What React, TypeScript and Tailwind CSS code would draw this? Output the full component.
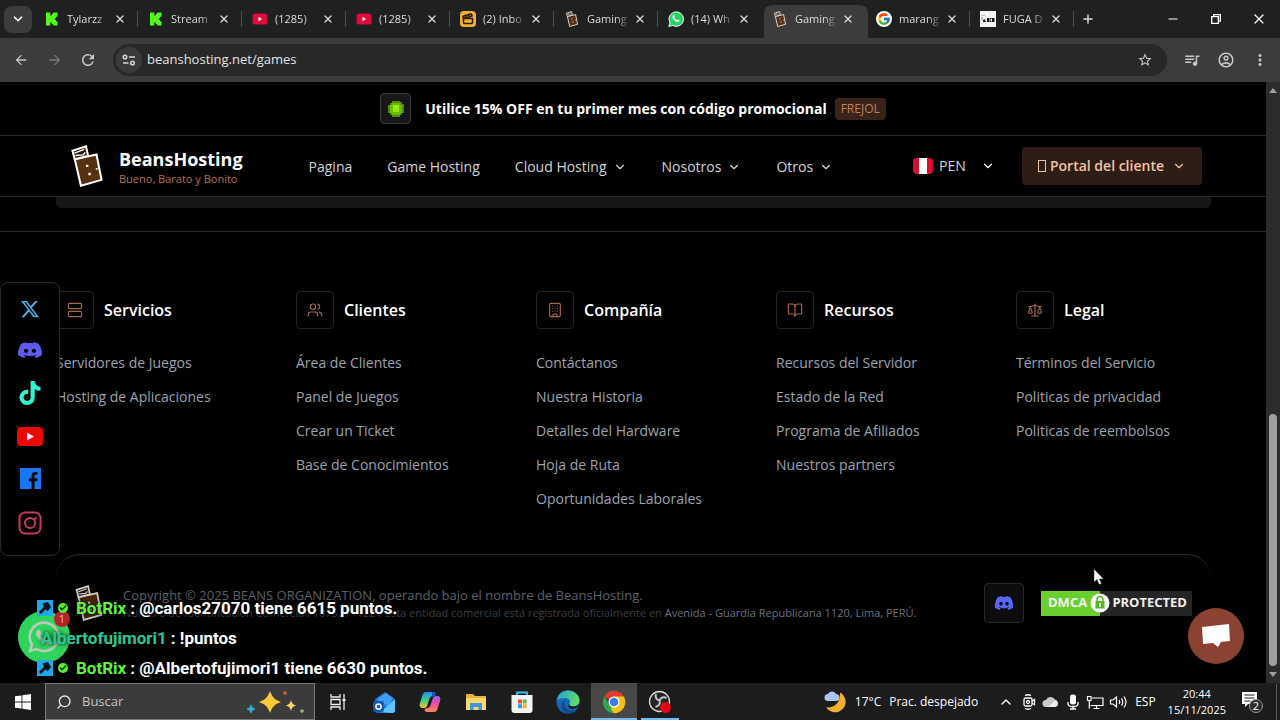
import React from "react";
import {
  MdArrowBack,
  MdArrowForward,
  MdMoreVert,
  MdOutlineAccountCircle,
  MdQueueMusic,
  MdRefresh,
  MdStarBorder,
} from "react-icons/md";
import {
  FaDiscord,
  FaTiktok,
  FaWhatsapp,
  FaXTwitter,
} from "react-icons/fa6";
import { FcGoogle } from "react-icons/fc";
import {
  BookOpen,
  Building,
  Check,
  ChevronDown,
  ChevronUp,
  Clapperboard,
  Minus,
  Plus,
  Scale,
  Search,
  Users,
  X,
} from "lucide-react";

interface IconProps {
  className?: string;
  strokeWidth?: number;
}

const BeansLogo = ({ className = "" }: IconProps) => (
  <svg viewBox="0 0 92 124" className={className} aria-hidden="true">
    <path d="M10 42 74 28 89 103 28 120Z" fill="#57300f" stroke="#fff" strokeWidth="6" />
    <path d="M3 17 43 4 49 32 10 42Z" fill="#2a1608" stroke="#fff" strokeWidth="6" />
    <path d="M9 24 38 13M12 31 34 29 41 22" fill="none" stroke="#fff" strokeWidth="4" />
    <path d="M43 58h7v7h-7zM50 82h7v7h-7zM72 68h5v5h-5z" fill="#fff" />
  </svg>
);

const KickIcon = () => (
  <svg viewBox="0 0 16 16" className="size-4 shrink-0">
    <path
      d="M2 1.500h4.200v3h1.500V3h1.500V1.500h4.300v4.300H12v1.500h-1.300v1.400H12v1.500h1.500v4.300H9.200V13H7.700v-1.500H6.200v3H2z"
      fill="#53fc18"
    />
  </svg>
);

const YoutubeTabIcon = () => (
  <svg viewBox="0 0 16 16" className="size-4 shrink-0">
    <rect x="0.500" y="2.500" width="15" height="11" rx="2.500" fill="#e2093c" />
    <path d="M6.500 5.800v4.400L10.200 8z" fill="#fff" />
  </svg>
);

const InboxIcon = () => (
  <span className="flex size-4 shrink-0 items-center justify-center rounded bg-[#f0b132] text-[#2b1c05]">
    <Clapperboard className="size-3" strokeWidth={3} />
  </span>
);

const WhatsappTabIcon = () => (
  <svg viewBox="0 0 16 16" className="size-4 shrink-0">
    <path d="M.8 15.400 2 11.600A7.200 7.200 0 1 1 4.800 14.400z" fill="#25d366" stroke="#fff" strokeWidth="1" />
    <path
      d="M5.300 4.200c.5-.4.9-.2 1.100.3l.4 1c.1.4-.3.8-.6 1.200.6 1.200 1.500 2 2.800 2.500.4-.4.7-1 1.200-.8l1.100.6c.5.3.3.9 0 1.300-.8.9-2 .9-3.200.3-1.700-.8-3-2.200-3.500-3.800-.3-1 0-2 .7-2.600z"
      fill="#fff"
    />
  </svg>
);

const GoogleTabIcon = () => (
  <span className="flex size-4 shrink-0 items-center justify-center rounded-full bg-white">
    <FcGoogle className="size-3.5" />
  </span>
);

const FugaIcon = () => (
  <svg viewBox="0 0 16 16" className="size-4 shrink-0">
    <path d="M0 0h16v16H0z" fill="#f4f4f4" />
    <path d="M3 11c0-2 .5-3 1.500-3L6 11zM7 7h2v4H7zM9.500 7h2v1h-1v2h1v1h-2zM12 7h2.500v4H12z" fill="#1b1b1b" />
    <path d="M1 4h4v1H1zM1 6h2v3H1z" fill="#bdbdbd" />
  </svg>
);

const BeansTabIcon = () => <BeansLogo className="h-4 w-4 shrink-0" />;

interface TabType {
  title: string;
  icon: React.FC;
  active?: boolean;
  next?: boolean;
}

const tabs: TabType[] = [
  { title: "Tylarzz", icon: KickIcon },
  { title: "Stream", icon: KickIcon },
  { title: "(1285)", icon: YoutubeTabIcon },
  { title: "(1285)", icon: YoutubeTabIcon },
  { title: "(2) Inbo", icon: InboxIcon },
  { title: "Gaming", icon: BeansTabIcon },
  { title: "(14) Wh", icon: WhatsappTabIcon, next: true },
  { title: "Gaming", icon: BeansTabIcon, active: true },
  { title: "marang", icon: GoogleTabIcon },
  { title: "FUGA D", icon: FugaIcon },
];

const TabStrip = () => (
  <div className="flex h-[38px] shrink-0 items-stretch bg-[#1f2020] text-[#dcdcdc]">
    <div className="flex w-9 shrink-0 items-center pl-1">
      <button
        aria-label="Buscar pestañas"
        className="flex h-[27px] w-7 items-center justify-center rounded-lg bg-[#3c3c3c] text-white"
      >
        <ChevronDown className="size-3.5" strokeWidth={3} />
      </button>
    </div>
    {tabs.map(({ title, icon: Icon, active, next }, i) => (
      <div
        key={i}
        className={`relative mt-[5px] flex h-[33px] w-26 min-w-0 items-center pb-[5px] pl-2 ${
          active ? "rounded-t-lg bg-[#3c3c3c]" : ""
        }`}
      >
        <Icon />
        <span className="ml-[7px] w-11 text-[11px] whitespace-nowrap [mask-image:linear-gradient(to_right,black_65%,transparent)]">
          {title}
        </span>
        <button aria-label="Cerrar pestaña" className="ml-px flex size-4 items-center justify-center">
          <X className="size-3" strokeWidth={2.5} />
        </button>
        {!active && !next && <span className="absolute right-0.5 h-4 w-px bg-[#4b4b4b]" />}
      </div>
    ))}
    <button aria-label="Nueva pestaña" className="flex w-6 items-center justify-center">
      <Plus className="size-3.5" strokeWidth={2.5} />
    </button>
    <div className="ml-auto flex text-white">
      <button aria-label="Minimizar" className="flex w-[43px] items-center justify-center">
        <Minus className="size-3.5" />
      </button>
      <button aria-label="Restaurar" className="flex w-[43px] items-center justify-center">
        <svg viewBox="0 0 10 10" className="size-2.5" fill="none" stroke="currentColor" strokeWidth="1.300">
          <path d="M.7 2.700h6.600v6.600H.7zM2.800 2.700v-2h6.500v6.500h-2" />
        </svg>
      </button>
      <button aria-label="Cerrar" className="flex w-[43px] items-center justify-center">
        <X className="size-4" strokeWidth={1.8} />
      </button>
    </div>
  </div>
);

const Toolbar = () => (
  <div className="flex h-11 shrink-0 items-center bg-[#3c3c3c] pr-1 pb-px pl-1 text-[#c7c7c7]">
    <button aria-label="Atrás" className="flex w-[34px] justify-center">
      <MdArrowBack className="size-4" />
    </button>
    <button aria-label="Adelante" className="flex w-[33px] justify-center text-[#7b7b7b]">
      <MdArrowForward className="size-4" />
    </button>
    <button aria-label="Recargar" className="flex w-[34px] justify-center">
      <MdRefresh className="size-[18px]" />
    </button>
    <div className="ml-2 flex h-8 flex-1 items-center rounded-full bg-[#282828] pr-3.5 pl-[3px]">
      <button
        aria-label="Información del sitio"
        className="flex size-[26px] items-center justify-center rounded-full bg-[#3a3a3a]"
      >
        <svg viewBox="0 0 14 12" className="h-3 w-3.5" fill="none" stroke="#d6d6d6" strokeWidth="1.500">
          <circle cx="3" cy="3" r="1.800" />
          <path d="M7 3h6M1 9h5.500" />
          <circle cx="10.500" cy="9" r="1.800" />
        </svg>
      </button>
      <input
        aria-label="Dirección"
        defaultValue="beanshosting.net/games"
        className="ml-[5px] min-w-0 flex-1 bg-transparent text-[13px] text-[#e3e3e3] outline-none"
      />
      <button aria-label="Añadir a favoritos">
        <MdStarBorder className="size-4" />
      </button>
    </div>
    <button aria-label="Multimedia" className="ml-2 flex w-[34px] justify-center">
      <MdQueueMusic className="size-[18px]" />
    </button>
    <button aria-label="Perfil" className="flex w-[34px] justify-center">
      <MdOutlineAccountCircle className="size-[18px]" />
    </button>
    <button aria-label="Menú" className="flex w-[33px] justify-center">
      <MdMoreVert className="size-[18px]" />
    </button>
  </div>
);

const PromoBar = () => (
  <div className="flex h-[54px] items-center justify-center border-b border-[#2b2b2b]">
    <span className="flex size-[31px] items-center justify-center rounded border border-[#3a3a3d] bg-[#17171a]">
      <svg viewBox="0 0 18 18" className="size-[18px]">
        <path d="M5 1h8v1h2v2h2v9h-2v2h-2v2H5v-2H3v-2H1V5h2V3h2z" fill="#4c8c06" />
        <path d="M5 3h8v2h2v8h-2v2H5v-2H3V5h2z" fill="#6dbb08" />
        <path d="M6 5h6v7H6z" fill="#92ea0e" />
      </svg>
    </span>
    <p className="ml-3.5 text-sm font-bold">Utilice 15% OFF en tu primer mes con código promocional</p>
    <span className="ml-2 rounded bg-[#3a2318] px-1.5 text-xs leading-[22px] text-[#bd825f]">FREJOL</span>
  </div>
);

const navItems = [
  { label: "Pagina", menu: false },
  { label: "Game Hosting", menu: false },
  { label: "Cloud Hosting", menu: true },
  { label: "Nosotros", menu: true },
  { label: "Otros", menu: true },
];

const Header = () => (
  <header className="flex h-[61px] items-center border-b border-[#2b2b2b] pr-16 pl-[71px]">
    <a href="#inicio" className="flex items-center">
      <BeansLogo className="h-[42px] w-8" />
      <span className="ml-4 flex flex-col pt-0.5">
        <span className="text-lg leading-6 font-bold">BeansHosting</span>
        <span className="text-[11px] leading-4 font-medium text-[#b5704c]">Bueno, Barato y Bonito</span>
      </span>
    </a>
    <nav className="ml-[66px] flex items-center gap-[35px] pt-px text-sm text-[#d4d4d8]">
      {navItems.map(({ label, menu }) =>
        menu ? (
          <button key={label} className="flex items-center gap-1.5">
            {label}
            <ChevronDown className="size-3.5" />
          </button>
        ) : (
          <a key={label} href="#nav">
            {label}
          </a>
        )
      )}
    </nav>
    <div className="relative ml-auto flex items-center">
      <svg viewBox="0 0 20 16" className="h-4 w-5">
        <rect width="20" height="16" rx="4" fill="#d80f30" />
        <path d="M6 0h8v16H6z" fill="#fff" />
      </svg>
      <select
        aria-label="Moneda"
        className="ml-1.5 w-14 appearance-none bg-transparent text-sm text-[#d4d4d8] outline-none"
      >
        <option>PEN</option>
        <option>USD</option>
      </select>
      <ChevronDown className="pointer-events-none absolute right-0 size-3.5" />
    </div>
    <button className="ml-[27px] flex h-[38px] items-center rounded bg-[#2e1d15] px-4 text-sm font-semibold text-[#f3c3a5]">
      <span className="mr-1 h-3 w-2 border border-[#f3c3a5]" />
      Portal del cliente
      <ChevronDown className="ml-2 size-3.5" />
    </button>
  </header>
);

const ServerIcon = ({ className = "", strokeWidth = 2 }: IconProps) => (
  <svg viewBox="0 0 24 24" className={className} fill="none" stroke="currentColor" strokeWidth={strokeWidth}>
    <rect x="2" y="2" width="20" height="8" rx="2" />
    <rect x="2" y="14" width="20" height="8" rx="2" />
  </svg>
);

const footerColumns = [
  {
    title: "Servicios",
    icon: ServerIcon,
    links: ["Servidores de Juegos", "Hosting de Aplicaciones"],
  },
  {
    title: "Clientes",
    icon: Users,
    links: ["Área de Clientes", "Panel de Juegos", "Crear un Ticket", "Base de Conocimientos"],
  },
  {
    title: "Compañía",
    icon: Building,
    links: [
      "Contáctanos",
      "Nuestra Historia",
      "Detalles del Hardware",
      "Hoja de Ruta",
      "Oportunidades Laborales",
    ],
  },
  {
    title: "Recursos",
    icon: BookOpen,
    links: ["Recursos del Servidor", "Estado de la Red", "Programa de Afiliados", "Nuestros partners"],
  },
  {
    title: "Legal",
    icon: Scale,
    links: ["Términos del Servicio", "Politicas de privacidad", "Politicas de reembolsos"],
  },
];

const DmcaBadge = () => (
  <a
    href="#dmca"
    className="relative flex h-[25px] w-[151px] items-center text-[13px] font-bold text-[#f1f1f1]"
  >
    <span className="flex h-full w-[59px] items-center bg-[#68cf2c] pl-[7px]">DMCA</span>
    <span className="flex h-full flex-1 items-center justify-end bg-[#252525] pr-[5px]">PROTECTED</span>
    <svg viewBox="0 0 20 20" className="absolute left-[49px] size-5">
      <circle cx="10" cy="10" r="9.500" fill="#fff" />
      <path d="M7 8V6.500a3 3 0 0 1 6 0V8" fill="none" stroke="#58b823" strokeWidth="1.500" />
      <path d="M5.500 8h9v7.500h-9z" fill="#58b823" />
      <path d="M9.200 10h1.600v4H9.200z" fill="#fff" />
    </svg>
  </a>
);

const Footer = () => (
  <footer className="mt-[23px] border-t border-[#2b2b2b] pt-[59px] pr-[55px] pl-14">
    <div className="grid grid-cols-5 gap-[45px]">
      {footerColumns.map(({ title, icon: Icon, links }) => (
        <section key={title}>
          <h2 className="flex items-center gap-2.5 text-base font-semibold">
            <span className="flex size-[38px] items-center justify-center rounded border border-[#232326] text-[#a4694a]">
              <Icon className="size-4" strokeWidth={1.7} />
            </span>
            {title}
          </h2>
          <ul className="mt-[22px] space-y-2.5 text-sm leading-6 whitespace-nowrap text-[#9ca3af]">
            {links.map((link) => (
              <li key={link}>
                <a href="#footer">{link}</a>
              </li>
            ))}
          </ul>
        </section>
      ))}
    </div>
    <div className="mt-[43px] flex items-center rounded-t-3xl border-t border-[#2b2b2b] px-[19px] pt-7">
      <BeansLogo className="h-9 w-7 opacity-80" />
      <div className="ml-5 pt-0.5 whitespace-nowrap">
        <p className="text-[13px] leading-[18px] text-[#5b606b]">
          Copyright © 2025 BEANS ORGANIZATION, operando bajo el nombre de BeansHosting.
        </p>
        <p className="text-[11px] leading-[18px] text-[#3a3d44]">
          Número de Identificación Comercial: 10752711221 Esta entidad comercial está registrada oficialmente en{" "}
          <span className="text-[#6b7280]">Avenida - Guardia Republicana 1120, Lima, PERÚ.</span>
        </p>
      </div>
      <a
        href="#discord"
        aria-label="Discord"
        className="ml-auto flex size-10 items-center justify-center rounded border border-[#27272a] bg-[#0c0c0e] text-[#5865f2]"
      >
        <FaDiscord className="size-5" />
      </a>
      <div className="ml-[17px]">
        <DmcaBadge />
      </div>
    </div>
  </footer>
);

const SocialBar = () => (
  <aside className="absolute top-[200px] left-0 flex w-[60px] flex-col items-center gap-[22px] rounded-lg border border-[#2b2b2b] bg-black pt-4 pb-5">
    <a href="#x" aria-label="X" className="text-[#4fa9e0]">
      <FaXTwitter className="size-5" />
    </a>
    <a href="#discord" aria-label="Discord" className="text-[#5e5cf0]">
      <FaDiscord className="h-[18px] w-[26px]" preserveAspectRatio="none" />
    </a>
    <a href="#tiktok" aria-label="TikTok" className="text-[#35f5d0]">
      <FaTiktok className="h-6 w-[22px]" />
    </a>
    <a href="#youtube" aria-label="YouTube">
      <svg viewBox="0 0 26 19" className="h-[19px] w-[26px]">
        <rect width="26" height="19" rx="4" fill="#f00505" />
        <path d="M10 5.500v8l7-4z" fill="#fff" />
      </svg>
    </a>
    <a href="#facebook" aria-label="Facebook">
      <svg viewBox="0 0 20 20" className="size-[21px]">
        <path d="M0 0h20v20H0z" fill="#1877f2" />
        <path
          d="M11 20v-7.500H8.500V9.700H11V7.500C11 5 12.500 3.800 14.800 3.800h1.900v2.500h-1.400c-1 0-1.400.6-1.400 1.400v2h2.800l-.4 2.800h-2.400V20z"
          fill="#05070c"
        />
      </svg>
    </a>
    <a href="#instagram" aria-label="Instagram">
      <svg viewBox="0 0 24 24" className="size-6" fill="none" stroke="#c9366c" strokeWidth="2">
        <rect x="1.500" y="1.500" width="21" height="21" rx="5.500" />
        <circle cx="12" cy="12" r="5" />
        <path d="M16 8.500 18.500 6.500" />
      </svg>
    </a>
  </aside>
);

interface ChatMessage {
  user: string;
  text: string;
  bot: boolean;
}

const messages: ChatMessage[] = [
  { user: "BotRix", text: "@carlos27070 tiene 6615 puntos.", bot: true },
  { user: "Albertofujimori1", text: "!puntos", bot: false },
  { user: "BotRix", text: "@Albertofujimori1 tiene 6630 puntos.", bot: true },
];

const ChatOverlay = () => (
  <ul className="absolute bottom-0 left-0 w-full pl-[37px] font-[Roboto] text-[17px] leading-[30px] font-bold whitespace-nowrap [text-shadow:0_0_4px_#000]">
    {messages.map(({ user, text, bot }) => (
      <li key={text} className="flex items-center">
        {bot && (
          <>
            <span className="flex size-4 items-center justify-center bg-[#1fa9e6]">
              <svg viewBox="0 0 16 16" className="size-4">
                <path d="M5.500 3.500 11 2l3 5-3.500 4.500-1.800-2.300L4 14l-2-2 5-5.300z" fill="#0a1420" />
              </svg>
            </span>
            <span className="mr-2 ml-[5px] flex size-2.5 items-center justify-center rounded-full bg-[#54f02d]">
              <Check className="size-2 text-[#0b2a05]" strokeWidth={4} />
            </span>
          </>
        )}
        <span className={bot ? "text-[#5ff53a]" : "pl-1 text-[#26c99a]"}>{user}</span>
        <span className="ml-1 text-white">: {text}</span>
      </li>
    ))}
  </ul>
);

const Scrollbar = () => (
  <div className="flex w-3.5 shrink-0 flex-col items-center bg-[#2c2c2c] py-1.5">
    <svg viewBox="0 0 8 5" className="h-[5px] w-2">
      <path d="M0 5 4 0l4 5z" fill="#9f9f9f" />
    </svg>
    <div className="flex w-2 flex-1 flex-col justify-end pb-1.5">
      <div className="h-[44%] rounded-full bg-[#9f9f9f]" />
    </div>
    <svg viewBox="0 0 8 5" className="h-[5px] w-2">
      <path d="M0 0h8L4 5z" fill="#9f9f9f" />
    </svg>
  </div>
);

const WindowsIcon = () => (
  <svg viewBox="0 0 16 16" className="size-4">
    <path
      d="M0 2.300 6.500 1.400v6.100H0zM7.400 1.300 16 0v7.500H7.400zM0 8.400h6.500v6.200L0 13.700zM7.400 8.400H16V16l-8.600-1.200z"
      fill="#fff"
    />
  </svg>
);

const SparkleIcon = () => (
  <svg viewBox="0 0 60 24" className="h-6 w-[60px]">
    <path d="M24 1c2.500 6.500 4.500 8.500 11 11-6.500 2.500-8.500 4.500-11 11-2.500-6.500-4.500-8.500-11-11 6.500-2.500 8.500-4.500 11-11z" fill="#fdc935" />
    <path d="M45 10c1 3.500 2 4.500 5 5.500-3 1-4 2-5 5.500-1-3.500-2-4.500-5-5.500 3-1 4-2 5-5.500z" fill="#f6d465" />
    <path d="M5 15c1 3 2 3 4 4-2 1-3 1-4 4-1-3-2-3-4-4 2-1 3-1 4-4z" fill="#35a9d4" stroke="#35a9d4" />
    <circle cx="39" cy="3" r="1.800" fill="#e0603a" />
    <circle cx="56" cy="21" r="1.800" fill="#8fca4a" />
  </svg>
);

const TaskViewIcon = () => (
  <svg viewBox="0 0 16 16" className="size-4" fill="none" stroke="#f0f0f0" strokeWidth="1.300">
    <path d="M1 0v3h9V0M1 16v-3h9v3M1 5.500h9v5H1zM14 0v16" />
    <path d="M12.500 5h3v2h-3z" fill="#f0f0f0" stroke="none" />
  </svg>
);

const OutlookIcon = () => (
  <svg viewBox="0 0 24 24" className="size-6">
    <path d="M3 9 13 2l10 7v11a3 3 0 0 1-3 3H6a3 3 0 0 1-3-3z" fill="#1b6fd0" />
    <path d="M5 9 14 3l7 5-4 6H9z" fill="#3f9fec" />
    <path d="M3 10l20 11V9l-9 6z" fill="#3ba6f2" />
    <path d="M23 10 8 22l12 1a3 3 0 0 0 3-3z" fill="#63c4fb" />
    <rect x="1" y="11" width="11" height="11" rx="2.500" fill="#0f59b8" />
    <circle cx="6.500" cy="16.500" r="2.600" fill="none" stroke="#fff" strokeWidth="1.500" />
  </svg>
);

const CopilotIcon = () => (
  <svg viewBox="0 0 24 24" className="size-6">
    <defs>
      <linearGradient id="copilotLeft" x1="0" y1="0" x2="0" y2="1">
        <stop offset="0" stopColor="#1c8ff0" />
        <stop offset="0.500" stopColor="#3ecb8c" />
        <stop offset="1" stopColor="#f6c52a" />
      </linearGradient>
      <linearGradient id="copilotRight" x1="0" y1="0" x2="0" y2="1">
        <stop offset="0" stopColor="#9a5cf2" />
        <stop offset="0.500" stopColor="#ec4fa0" />
        <stop offset="1" stopColor="#fb8a4c" />
      </linearGradient>
    </defs>
    <path
      d="M8 2h7c2 0 2 1 2.500 3L15 6c-2 0-3 1-3.500 3L9 16c-1 2-2 2-4 2-3 0-4-2-3-5l2.500-8C5.200 3 6 2 8 2z"
      fill="url(#copilotLeft)"
    />
    <path
      d="M16 22H9c-2 0-2-1-2.500-3L9 18c2 0 3-1 3.500-3L15 8c1-2 2-2 4-2 3 0 4 2 3 5l-2.500 8c-.7 2-1.500 3-3.500 3z"
      fill="url(#copilotRight)"
    />
    <path d="M14 2c2 0 3 1 3.500 4H19c-3 0-4 1-4 2l-1-3z" fill="#1b4fc9" />
  </svg>
);

const ExplorerIcon = () => (
  <svg viewBox="0 0 22 20" className="h-5 w-[22px]">
    <path d="M1 2h7l2 2h11v14H1z" fill="#e9b13a" />
    <path d="M1 6h20v12H1z" fill="#fcd868" />
    <path d="M5 18v-7h12v7h-3.500v-3h-5v3z" fill="#3f95d8" />
  </svg>
);

const StoreIcon = () => (
  <svg viewBox="0 0 24 24" className="size-6">
    <path d="M7 6V2.500h10V6" fill="none" stroke="#3cc0ee" strokeWidth="1.800" />
    <path d="M1.500 5h21v15a3 3 0 0 1-3 3h-15a3 3 0 0 1-3-3z" fill="#f3f3f3" />
    <path d="M8 9.500h4v4H8z" fill="#e8502e" />
    <path d="M12.700 9.500h4v4h-4z" fill="#6fb53a" />
    <path d="M8 14.200h4v4H8z" fill="#2f9fe0" />
    <path d="M12.700 14.200h4v4h-4z" fill="#f5b52a" />
  </svg>
);

const EdgeIcon = () => (
  <svg viewBox="0 0 24 24" className="size-6">
    <defs>
      <linearGradient id="edgeTop" x1="0" y1="0" x2="1" y2="0.300">
        <stop offset="0" stopColor="#1f9fe0" />
        <stop offset="1" stopColor="#5fdc6a" />
      </linearGradient>
    </defs>
    <circle cx="12" cy="12" r="11.500" fill="#1568b8" />
    <path
      d="M.7 11C1.500 4.500 6 .5 12 .5c6.500 0 11.500 4.500 11.500 10 0 4-3 6-6.500 6-2.500 0-4-1-3.500-2.500 1-1.500 1-5.500-4-6C5 8 2 9 .7 11z"
      fill="url(#edgeTop)"
    />
    <path
      d="M8.500 13.500c0 4.500 4 7 8 7 2 0 3.500-.6 5-1.400-2 2.800-5.500 4.400-9 4.400-5 0-8-4-7-8.500.5-3 2.500-5 4.500-5.500-1 1-1.500 2.500-1.500 4z"
      fill="#0f4a93"
    />
    <path d="M13.500 14c-.5 1.500 1 2.500 3.500 2.500s4.800-1 6-3l-1 3.500-5 2c-4 0-6-2.500-3.500-5z" fill="#1c1c1c" />
  </svg>
);

const ChromeIcon = () => (
  <svg viewBox="0 0 24 24" className="size-6">
    <path d="M12 12 2.300 6.400a11.300 11.300 0 0 1 19.500 0z" fill="#e33b2e" />
    <path d="M12 12V6.400h9.800A11.300 11.300 0 0 1 12 23.300z" fill="#fbc116" />
    <path d="M12 12 12 23.300A11.300 11.300 0 0 1 2.300 6.400L7.500 15z" fill="#2da94f" />
    <path d="M12 23.300 17 14.500 12 12 9 19z" fill="#fbc116" />
    <circle cx="12" cy="12" r="5.500" fill="#fff" />
    <circle cx="12" cy="12" r="4.300" fill="#3b7ded" />
  </svg>
);

const ObsIcon = () => (
  <svg viewBox="0 0 24 24" className="size-6">
    <circle cx="11.500" cy="11.500" r="10" fill="#242424" stroke="#d9d9d9" strokeWidth="1.300" />
    <path
      d="M8 4c-1 3 0 5.500 3.500 6.500M18.500 8c-3-1.500-5.500-.5-7 2.500M11.500 10.500c1 3-.5 5.500-4 6.500"
      fill="none"
      stroke="#c4c4c4"
      strokeWidth="2"
    />
    <circle cx="17.500" cy="17.500" r="5.500" fill="#e30613" />
  </svg>
);

const apps = [
  { name: "Vista de tareas", icon: TaskViewIcon, state: "" },
  { name: "Outlook", icon: OutlookIcon, state: "" },
  { name: "Copilot", icon: CopilotIcon, state: "" },
  { name: "Explorador", icon: ExplorerIcon, state: "" },
  { name: "Store", icon: StoreIcon, state: "" },
  { name: "Edge", icon: EdgeIcon, state: "" },
  { name: "Chrome", icon: ChromeIcon, state: "active" },
  { name: "OBS", icon: ObsIcon, state: "open" },
];

// crescent moon behind a small cloud
const WeatherIcon = () => (
  <svg viewBox="0 0 24 22" className="h-[22px] w-6">
    <path d="M17 1.500A10.500 10.500 0 1 1 3 16c6 2 15-3 14-14.500z" fill="#f5ae2e" />
    <path d="M5 10a3.500 3.500 0 0 1 0-7 4.500 4.500 0 0 1 8 0 3.500 3.500 0 0 1 0 7z" fill="#a9c6f3" />
  </svg>
);

const Tray = () => (
  <div className="ml-auto flex items-center pr-[3px] text-white">
    <button className="flex items-center gap-2 text-xs">
      <WeatherIcon />
      <span>17°C</span>
      <span>Prac. despejado</span>
    </button>
    <div className="ml-5 flex items-center gap-[5px]">
      <ChevronUp className="mr-0.5 size-4" strokeWidth={2} />
      <svg viewBox="0 0 16 16" className="size-4" fill="none" stroke="#fff" strokeWidth="1.300">
        <rect x="3" y="4" width="8" height="8" rx="1.500" />
        <path d="M11 7l2.500-1.500v5L11 9M4 1.500q3-1.500 6 0M4 14.500q3 1.500 6 0" />
        <circle cx="7" cy="8" r="1.500" />
      </svg>
      <svg viewBox="0 0 18 14" className="h-3.5 w-[18px]">
        <path d="M4 12a3.500 3.500 0 0 1 0-7 5 5 0 0 1 9-.5A4 4 0 0 1 14 12z" fill="#c9c9c9" />
        <path d="M6 12 14 5l2 5-3 2z" fill="#f0f0f0" />
      </svg>
      <svg viewBox="0 0 12 16" className="h-4 w-4">
        <rect x="3" y="0.500" width="6" height="10" rx="2.500" fill="#fff" />
        <path d="M1 8v1.500a3 3 0 0 0 3 3h4a3 3 0 0 0 3-3V8M6 12v3M3 15h6" fill="none" stroke="#fff" strokeWidth="1.300" />
      </svg>
      <svg viewBox="0 0 18 16" className="h-4 w-[18px]" fill="none" stroke="#fff" strokeWidth="1.200">
        <path d="M6 4h11v7.500H4.500M10.500 11.500V14M7.500 14.500h6M1.500 2.500h3.500v4H1.500zM3.300 6.500v8" />
      </svg>
      <svg viewBox="0 0 18 16" className="h-4 w-[18px]" fill="none" stroke="#fff" strokeWidth="1.200">
        <path d="M1.500 6H4l3.500-3v10L4 10H1.500zM10 6q1.500 2 0 4M12.500 4.300q2.500 3.700 0 7.400M15 2.500q4 5.500 0 11" />
      </svg>
    </div>
    <span className="ml-2 text-xs">ESP</span>
    <div className="ml-3 text-center text-[11px] leading-4">
      <div>20:44</div>
      <div>15/11/2025</div>
    </div>
    <button aria-label="Notificaciones" className="ml-3.5">
      <svg viewBox="0 0 24 24" className="size-6">
        <path d="M2 2h15v12H8l-3 3v-3H2z" fill="#fff" />
        <path d="M4.500 5h10M4.500 8h10M4.500 11h6" stroke="#1c1c1c" strokeWidth="1.200" />
        <circle cx="16" cy="16" r="6.500" fill="#2b2b2b" stroke="#9a9a9a" />
        <text x="16" y="20" textAnchor="middle" fontSize="11" fill="#fff">
          2
        </text>
      </svg>
    </button>
    <span className="ml-3 h-9 w-px bg-[#5a5a5a]" />
  </div>
);

const Taskbar = () => (
  <div className="flex h-[37px] shrink-0 items-stretch bg-[#1c1c1c]">
    <button aria-label="Inicio" className="flex w-[45px] items-center justify-center">
      <WindowsIcon />
    </button>
    <label className="flex w-[270px] items-center border border-[#7a7a7a] bg-[#3b3b3b] pr-2 pl-2.5">
      <Search className="size-4 -scale-x-100 text-[#e8e8e8]" strokeWidth={2} />
      <input
        type="search"
        aria-label="Buscar"
        placeholder="Buscar"
        className="ml-2.5 min-w-0 flex-1 bg-transparent text-[13px] outline-none placeholder:text-[#c4c4c4]"
      />
      <SparkleIcon />
    </label>
    {apps.map(({ name, icon: Icon, state }) => (
      <button
        key={name}
        aria-label={name}
        className={`relative flex w-[46px] items-center justify-center ${
          state === "active" ? "bg-[#484848]" : ""
        }`}
      >
        <Icon />
        {state === "active" && <span className="absolute inset-x-0 bottom-0 h-0.5 bg-[#76b9ed]" />}
        {state === "open" && <span className="absolute inset-x-1 bottom-0 h-0.5 bg-[#76b9ed]" />}
      </button>
    ))}
    <Tray />
  </div>
);

const App: React.FC = () => {
  return (
    <div className="flex h-screen flex-col overflow-hidden bg-black font-['Open_Sans',sans-serif] text-white">
      <TabStrip />
      <Toolbar />
      <div className="relative flex min-h-0 flex-1">
        <main className="min-w-0 flex-1 overflow-hidden">
          <PromoBar />
          <Header />
          <div className="mr-[55px] ml-14 h-[11px] rounded-b-md bg-[#17171a]" />
          <Footer />
        </main>
        <Scrollbar />
        <SocialBar />
        <a
          href="#whatsapp"
          aria-label="WhatsApp"
          className="absolute bottom-5 left-[18px] flex size-[52px] items-center justify-center rounded-full bg-[#2fd45c] text-[#b9c9bc]"
        >
          <FaWhatsapp className="size-9" />
          <span className="absolute top-0 right-0 flex size-4 items-center justify-center rounded-full bg-[#b3242a] text-[11px] text-[#e8b5b5]">
            1
          </span>
        </a>
        <ChatOverlay />
        <button
          aria-label="Chat"
          className="absolute right-9 bottom-[19px] flex size-14 items-center justify-center rounded-full bg-[#8b4233]"
        >
          <svg viewBox="0 0 28 24" className="h-6 w-7">
            <path d="M0 3 27 0l1 17-9 1-3 5-5-4-10 1z" fill="#fff" />
          </svg>
        </button>
        <svg viewBox="0 0 12 18" className="pointer-events-none absolute right-[175px] bottom-[97px] h-[18px] w-3">
          <path d="M1 1v13l3-2.500 2.200 5L8.500 15.500 6.300 11H10.500z" fill="#fff" stroke="#333" strokeWidth="0.500" />
        </svg>
      </div>
      <Taskbar />
    </div>
  );
};

export default App;
